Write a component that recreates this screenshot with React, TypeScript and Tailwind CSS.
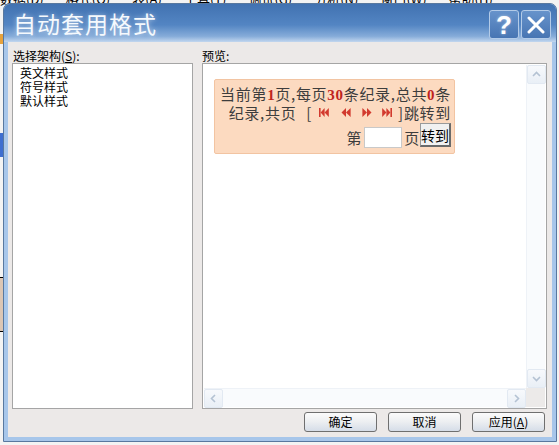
import React from 'react'

const cjk = "font-['Noto_Sans_CJK_SC','Noto_Sans',sans-serif]"

function PagerIcon({ kind }: { kind: 'first' | 'prev' | 'next' | 'last' }) {
  const left = kind === 'first' || kind === 'prev'
  return (
    <svg width="10" height="9" viewBox="0 0 10 9" className="shrink-0 block">
      <g fill="#d23a2e">
        {left ? (
          <>
            {kind === 'first' && <rect x="0" y="0" width="1.6" height="9" />}
            <polygon points={kind === 'first' ? '1.6,4.5 5.6,0 5.6,9' : '0.5,4.5 5,0 5,9'} />
            <polygon points={kind === 'first' ? '5.6,4.5 9.8,0 9.8,9' : '5,4.5 9.6,0 9.6,9'} />
          </>
        ) : (
          <>
            <polygon points={kind === 'last' ? '0.2,0 4.4,4.5 0.2,9' : '0.4,0 5,4.5 0.4,9'} />
            <polygon points={kind === 'last' ? '4.4,0 8.4,4.5 4.4,9' : '5,0 9.5,4.5 5,9'} />
            {kind === 'last' && <rect x="8.4" y="0" width="1.6" height="9" />}
          </>
        )}
      </g>
    </svg>
  )
}

function Chevron({ dir }: { dir: 'up' | 'down' | 'left' | 'right' }) {
  const pts = {
    up: '2,7 5.5,3.5 9,7',
    down: '2,4 5.5,7.5 9,4',
    left: '7,2 3.5,5.5 7,9',
    right: '4,2 7.5,5.5 4,9',
  }[dir]
  return (
    <svg width="11" height="11" viewBox="0 0 11 11">
      <polyline points={pts} fill="none" stroke="#b4c2d3" strokeWidth="1.6" />
    </svg>
  )
}

function ScrollBtn({ dir }: { dir: 'up' | 'down' | 'left' | 'right' }) {
  return (
    <div className="w-[19px] h-[19px] flex items-center justify-center rounded-[2px] border border-[#e2e9f2] bg-[linear-gradient(to_bottom,#f7f9fc,#e9eff6)]">
      <Chevron dir={dir} />
    </div>
  )
}

function DlgButton({ children }: { children: React.ReactNode }) {
  return (
    <button className="w-[73px] h-[20px] rounded-[3px] border border-[#6f6f6f] bg-[linear-gradient(to_bottom,#fbfbfb_0%,#eceef1_50%,#d5dde8_100%)] text-[12px] leading-[18px] text-black text-center">
      {children}
    </button>
  )
}

const red = "text-[#c0241e] font-['Liberation_Serif',serif]"

export default function App() {
  return (
    <div className={`relative w-[559px] h-[445px] overflow-hidden bg-[#f3f3f3] ${cjk}`}>
      {/* app behind the dialog */}
      <div className="absolute left-0 top-[-9px] flex gap-[22px] text-[13px] leading-[16px] text-black whitespace-nowrap">
        <span>数据(D)</span>
        <span>格式(O)</span>
        <span>表(A)</span>
        <span>工具(T)</span>
        <span>调试(G)</span>
        <span>分析(N)</span>
        <span>窗口(W)</span>
        <span>帮助(H)</span>
      </div>
      <div className="absolute left-0 top-[34px] w-[3px] h-[10px] bg-[#e7a23c]" />
      <div className="absolute left-0 top-[133px] w-[3px] h-[24px] bg-[#3f6fd0]" />
      <div className="absolute left-0 top-[277px] w-[3px] h-[55px] bg-[#dcc6b4] border-y border-black" />

      {/* dialog window */}
      <div className="absolute left-[3px] top-[3px] w-[554px] h-[439px] rounded-t-[7px] border border-[#58789f] bg-[#a7c6ea] flex flex-col overflow-hidden">
        {/* title bar */}
        <div className="h-[38px] shrink-0 flex items-start justify-between pl-[9px] pr-[5px] bg-[linear-gradient(to_bottom,#4172b1_0%,#5385c3_55%,#86acd9_85%,#c2d7ef_100%)]">
          <span className="text-[23px] leading-[30px] tracking-[1px] text-[#f5f9fd] [text-shadow:0_0_5px_rgba(255,255,255,0.55)] mt-[4px]">
            自动套用格式
          </span>
          <div className="flex gap-[2px] mt-[6px]">
            <div className="w-[30px] h-[29px] rounded-[3px] border border-[#b3cbe8] bg-[linear-gradient(to_bottom,#6793cb,#4775b3)] flex items-center justify-center text-white text-[26px] font-bold leading-none font-['Liberation_Sans',sans-serif] [text-shadow:0_0_3px_rgba(255,255,255,0.5)]">
              ?
            </div>
            <div className="w-[30px] h-[29px] rounded-[3px] border border-[#b3cbe8] bg-[linear-gradient(to_bottom,#6793cb,#4775b3)] flex items-center justify-center">
              <svg width="18" height="18" viewBox="0 0 18 18">
                <path d="M2 2 L16 16 M16 2 L2 16" stroke="#fff" strokeWidth="3" strokeLinecap="round" />
              </svg>
            </div>
          </div>
        </div>

        {/* body */}
        <div className="flex-1 mx-[4px] mb-[4px] bg-[#ece9e8] flex flex-col pl-[4px] pr-[5px] pt-[7px]">
          <div className="flex gap-[9px]">
            {/* structure list */}
            <div className="w-[181px] flex flex-col">
              <div className="h-[14px] text-[12px] leading-[14px] text-black pl-[1px]">
                选择架构(<span className="underline">S</span>):
              </div>
              <div className="h-[346px] border border-[#a5a5a5] bg-white pl-[7px] pt-[2px] text-[12px] leading-[14px] text-black">
                <div>英文样式</div>
                <div>符号样式</div>
                <div>默认样式</div>
              </div>
            </div>

            {/* preview */}
            <div className="w-[345px] flex flex-col">
              <div className="h-[14px] text-[12px] leading-[14px] text-black">预览:</div>
              <div className="h-[346px] border border-[#a5a5a5] bg-white p-[1px] flex flex-col">
                <div className="flex flex-1 min-h-0">
                  <div className="flex-1 pl-[10px] pt-[14px]">
                    <div className="w-[241px] h-[75px] bg-[#fcdac0] border border-[#f2c4a2] rounded-[2px] pr-[3px] pt-[5px] text-[15px] leading-[17px] tracking-[0.7px] text-[#3d3d3d] text-right">
                      <div className="whitespace-nowrap">
                        当前第<b className={red}>1</b>页,每页<b className={red}>30</b>条纪录,总共<b className={red}>0</b>条
                      </div>
                      <div className="flex justify-end items-center whitespace-nowrap">
                        <span>纪录,共页</span>
                        <span className="ml-[10px]">[</span>
                        <span className="ml-[7px]"><PagerIcon kind="first" /></span>
                        <span className="ml-[12px]"><PagerIcon kind="prev" /></span>
                        <span className="ml-[11px]"><PagerIcon kind="next" /></span>
                        <span className="ml-[10px]"><PagerIcon kind="last" /></span>
                        <span className="ml-[6px]">]</span>
                        <span>跳转到</span>
                      </div>
                      <div className="flex justify-end items-end mt-[2px]">
                        <span className="leading-[20px]">第</span>
                        <input className="w-[38px] h-[21px] bg-white border border-[#c9c9c9] mx-[2px]" />
                        <span className="leading-[20px]">页</span>
                        <button className="w-[31px] h-[24px] mb-[1px] bg-[#f1f1f1] border border-[#9a9a9a] border-r-[2px] border-b-[2px] border-r-[#6a6a6a] border-b-[#6a6a6a] text-[14px] leading-[18px] tracking-normal text-black">
                          转到
                        </button>
                      </div>
                    </div>
                  </div>
                  {/* vertical scrollbar */}
                  <div className="w-[19px] bg-[#f9fbfd] flex flex-col justify-between border-l border-[#eef2f7]">
                    <ScrollBtn dir="up" />
                    <ScrollBtn dir="down" />
                  </div>
                </div>
                {/* horizontal scrollbar */}
                <div className="h-[19px] flex bg-[#f9fbfd]">
                  <div className="flex-1 flex justify-between border-t border-[#eef2f7]">
                    <ScrollBtn dir="left" />
                    <ScrollBtn dir="right" />
                  </div>
                  <div className="w-[19px] bg-[#eceae9]" />
                </div>
              </div>
            </div>
          </div>

          {/* buttons */}
          <div className="flex justify-end gap-[11px] mt-[3px] pr-[2px]">
            <DlgButton>确定</DlgButton>
            <DlgButton>取消</DlgButton>
            <DlgButton>
              应用(<span className="underline">A</span>)
            </DlgButton>
          </div>
        </div>
      </div>
    </div>
  )
}
